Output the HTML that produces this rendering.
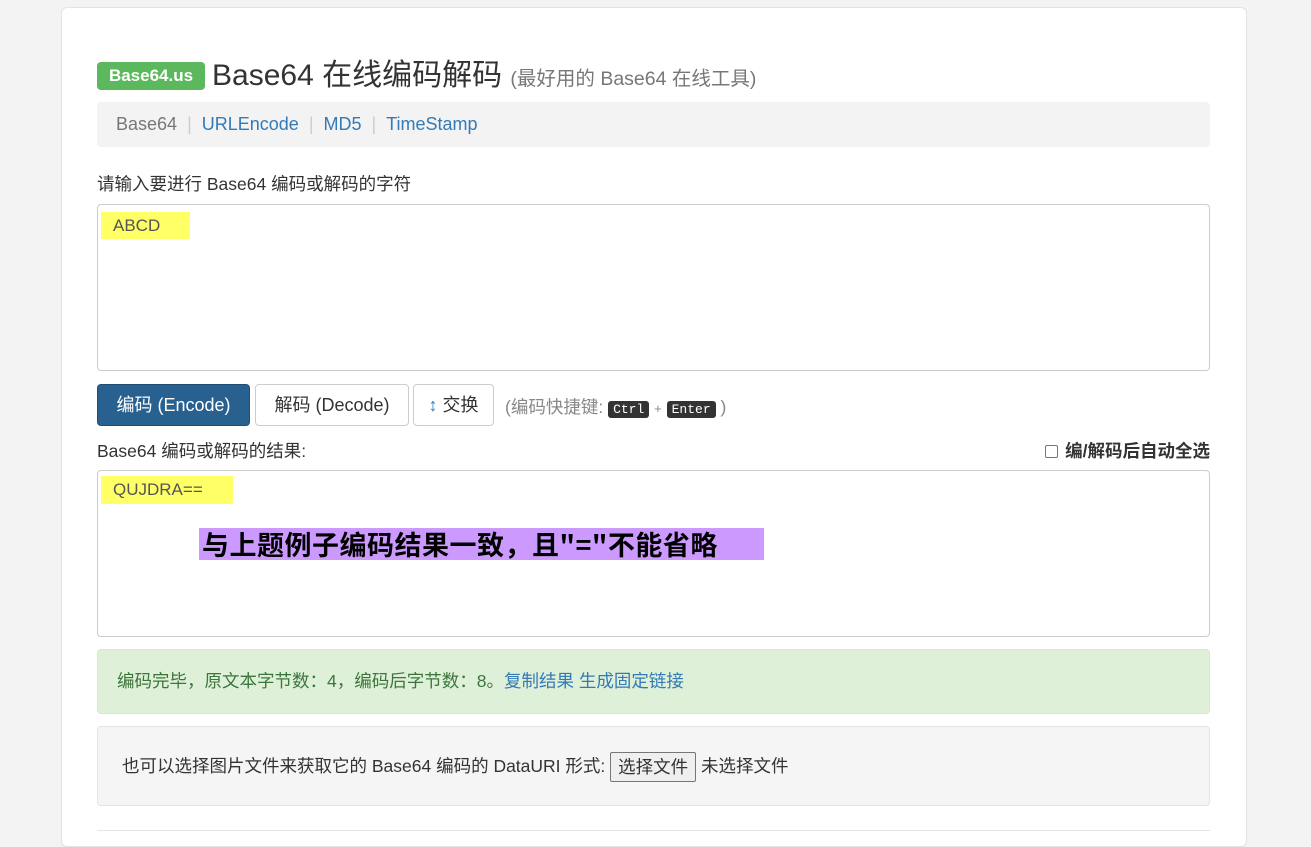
<!DOCTYPE html>
<html><head><meta charset="utf-8"><style>
*{box-sizing:border-box;margin:0;padding:0}
body{width:1311px;height:835px;overflow:hidden;background:#f3f3f3;font-family:"Liberation Sans","Noto Sans CJK SC",sans-serif;color:#333;font-size:17.5px;position:relative}
.wrap{position:absolute;left:61px;top:7px;width:1186px;height:840px;background:#fff;border:1px solid #e3e3e3;border-radius:6px}
.a{position:absolute;white-space:nowrap}
.badge{left:97px;top:62px;width:108px;height:28px;background:#5cb85c;color:#fff;font-weight:bold;font-size:17px;border-radius:4px;text-align:center;line-height:28px}
.title{left:212px;top:58px;font-size:30px;line-height:36px;color:#333}
.title small{font-size:19.5px;color:#777}
.nav{left:97px;top:102px;width:1113px;height:45px;background:#f3f3f3;border-radius:4px;line-height:45px;padding-left:19px;font-size:18px;color:#777}
.nav a{color:#337ab7;text-decoration:none}
.nav .s{color:#ccc;margin:0 10px}
.ta{left:97px;width:1113px;height:167px;border:1px solid #ccc;border-radius:4px}
.hl{background:#ffff66;font-size:17px;line-height:26px;padding-left:12px;color:#555}
.btn{top:384px;height:42px;border:1px solid #ccc;border-radius:4px;line-height:40px;text-align:center;font-size:18px;background:#fff;color:#333}
kbd{background:#333;color:#fff;font-family:"Liberation Mono",monospace;font-size:13px;padding:1px 5px;border-radius:3px}
</style></head><body>
<div class="wrap"></div>
<div class="a badge">Base64.us</div>
<div class="a title">Base64 在线编码解码 <small>(最好用的 Base64 在线工具)</small></div>
<div class="a nav">Base64<span class="s">|</span><a>URLEncode</a><span class="s">|</span><a>MD5</a><span class="s">|</span><a>TimeStamp</a></div>
<div class="a" style="left:97px;top:171px">请输入要进行 Base64 编码或解码的字符</div>
<div class="a ta" style="top:204px"></div>
<div class="a hl" style="left:101px;top:212px;width:89px;height:27px;line-height:27px">ABCD</div>
<div class="a btn" style="left:97px;width:153px;background:#286090;border-color:#204d74;color:#fff">编码 (Encode)</div>
<div class="a btn" style="left:255px;width:154px">解码 (Decode)</div>
<div class="a btn" style="left:413px;width:81px"><span style="color:#337ab7">↕</span> 交换</div>
<div class="a" style="left:505px;top:394px;color:#888">(编码快捷键: <kbd>Ctrl</kbd> <span style="font-size:13px">+</span> <kbd>Enter</kbd> )</div>
<div class="a" style="left:97px;top:438px">Base64 编码或解码的结果:</div>
<div class="a" style="right:101px;top:438px;font-weight:bold"><span style="display:inline-block;width:13px;height:13px;border:1px solid #767676;border-radius:2px;vertical-align:-1px;margin-right:7px"></span>编/解码后自动全选</div>
<div class="a ta" style="top:470px"></div>
<div class="a hl" style="left:101px;top:476px;width:132px;height:28px;line-height:28px">QUJDRA==</div>
<div class="a" style="left:199px;top:528px;width:565px;height:32px;background:#cc99ff;color:#000;font-size:27px;font-weight:bold;letter-spacing:0.5px;line-height:32px;font-family:'Noto Sans CJK SC',sans-serif;padding-left:3px">与上题例子编码结果一致，且"="不能省略</div>
<div class="a" style="left:97px;top:649px;width:1113px;height:65px;background:#dff0d8;border:1px solid #d6e9c6;border-radius:4px;line-height:63px;padding-left:19px;color:#3c763d;font-family:'Liberation Sans','Noto Sans CJK SC',sans-serif">编码完毕，原文本字节数：<span style="font-family:'Liberation Sans'">4</span>，编码后字节数：<span style="font-family:'Liberation Sans'">8</span>。<span style="color:#337ab7">复制结果 生成固定链接</span></div>
<div class="a" style="left:97px;top:726px;width:1113px;height:80px;background:#f5f5f5;border:1px solid #e3e3e3;border-radius:4px;line-height:78px;padding-left:24px">也可以选择图片文件来获取它的 Base64 编码的 DataURI 形式: <span style="display:inline-block;border:1px solid #767676;background:#efefef;border-radius:2px;line-height:28px;padding:0 7px;vertical-align:middle">选择文件</span> 未选择文件</div>
<div class="a" style="left:97px;top:830px;width:1113px;height:1px;background:#e5e5e5"></div>
</body></html>
